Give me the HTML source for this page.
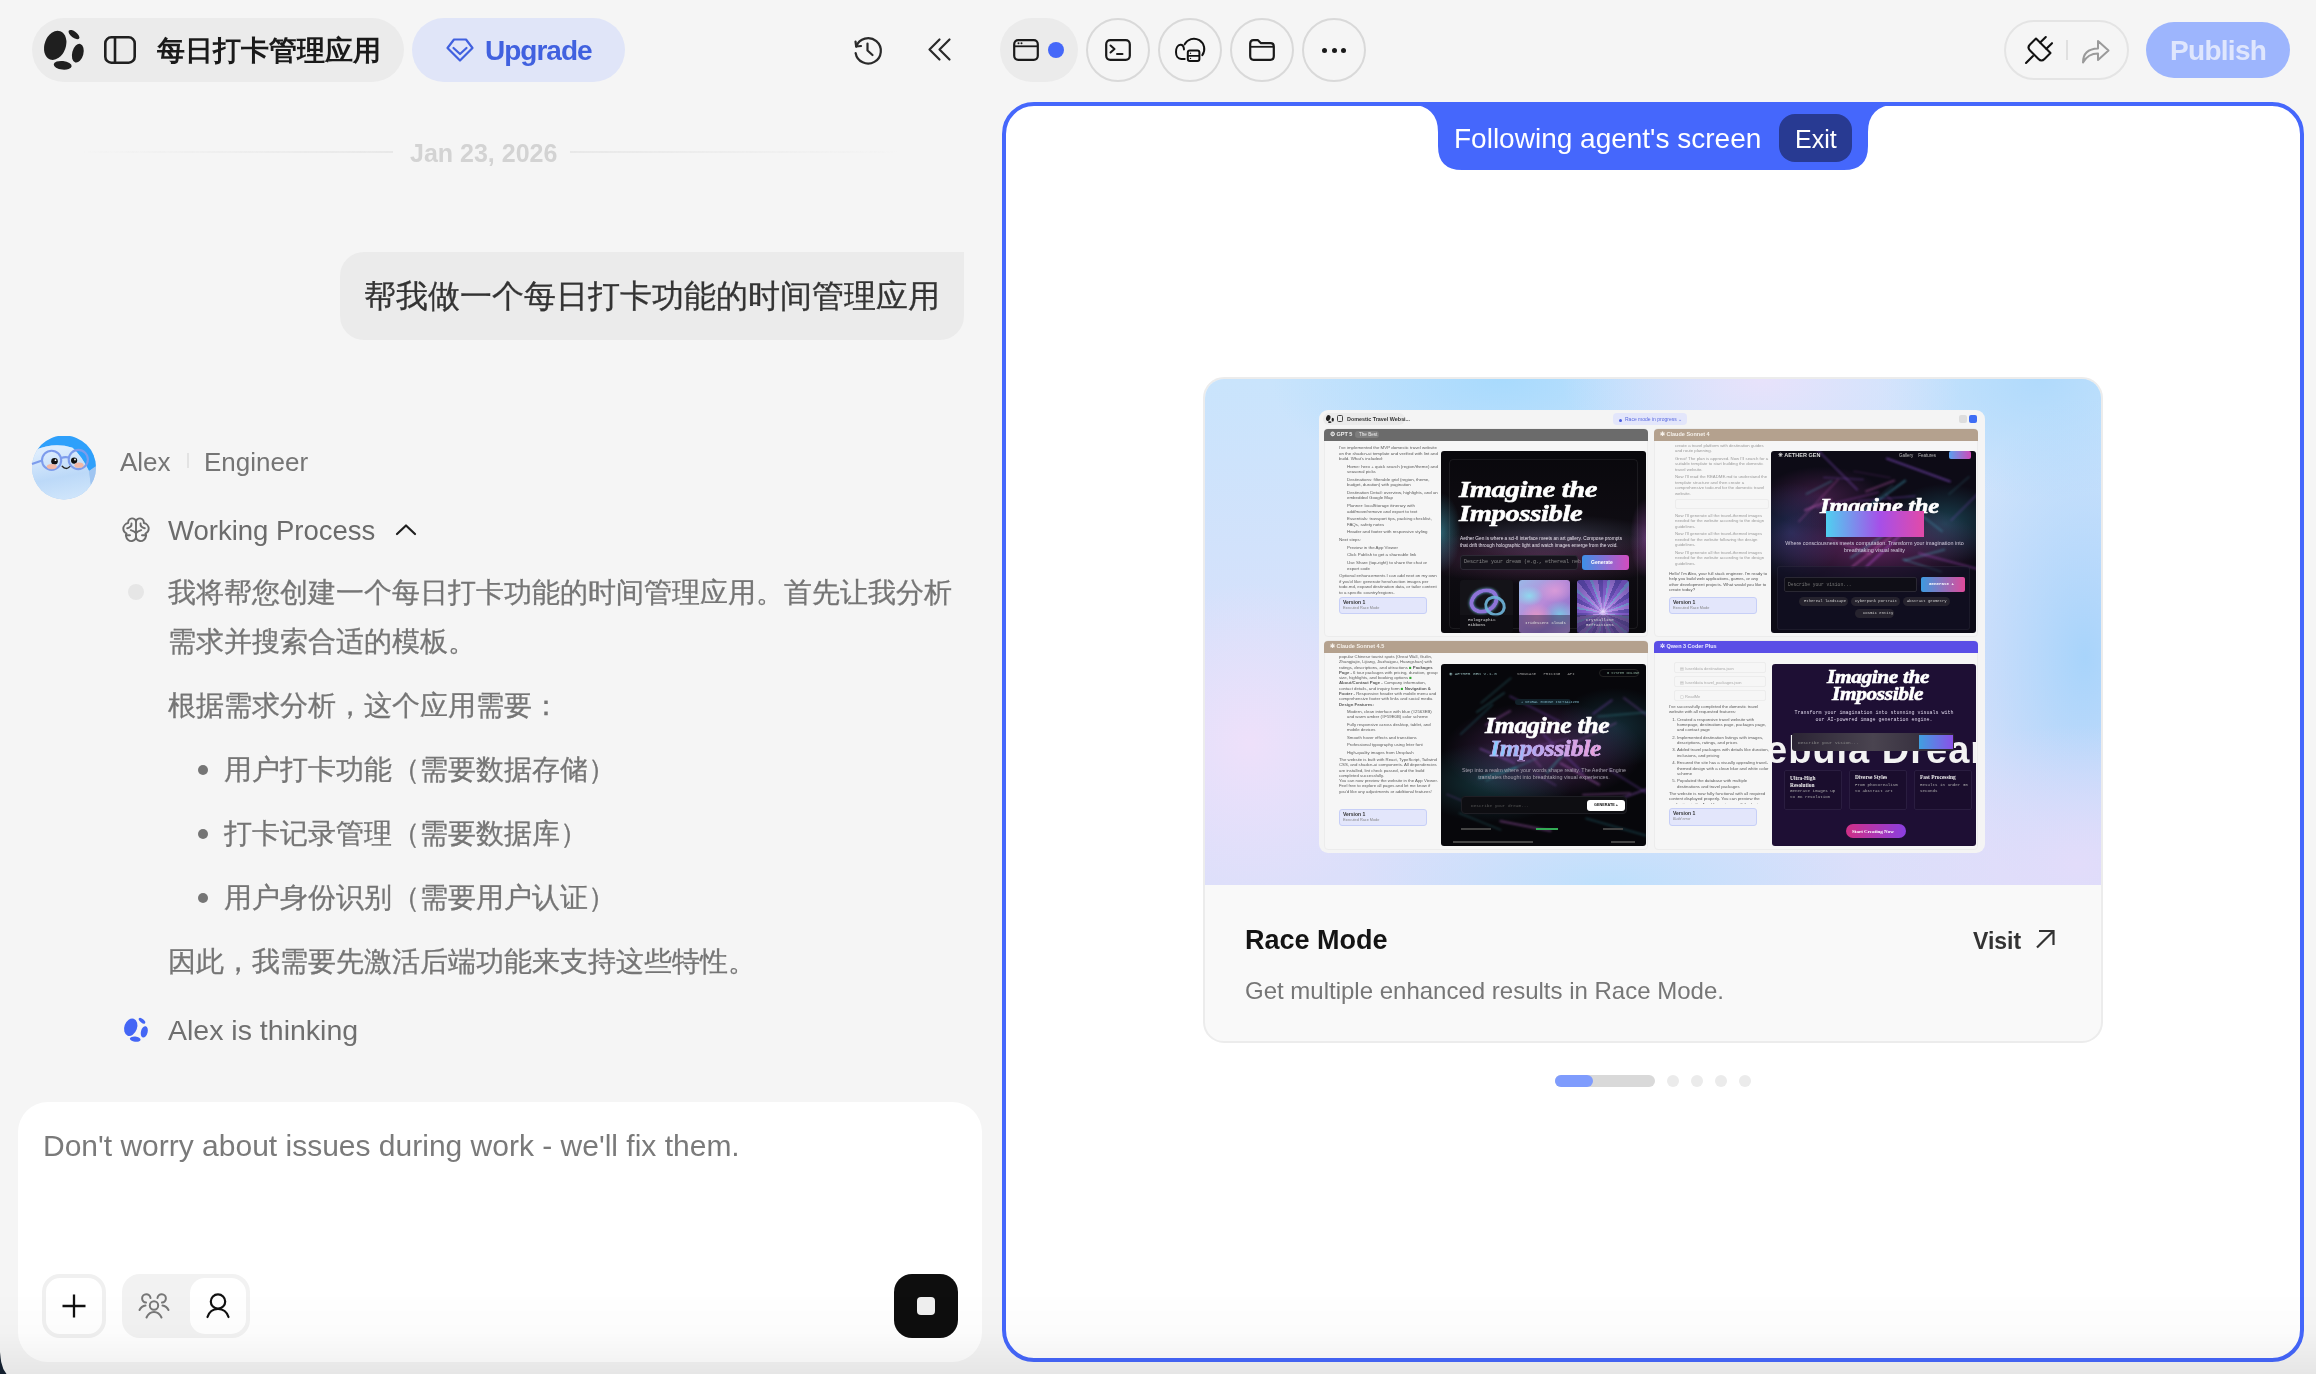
<!DOCTYPE html>
<html><head><meta charset="utf-8">
<style>
*{box-sizing:border-box;margin:0;padding:0}
html,body{width:2316px;height:1374px;overflow:hidden;background:#f5f5f5;font-family:"Liberation Sans",sans-serif}
body>*{will-change:transform}
.a{position:absolute}
.t{position:absolute;white-space:nowrap;line-height:1}
svg{position:absolute;overflow:visible}
.cj{-webkit-text-stroke:0.3px currentColor}
</style></head><body>
<!-- ============ LEFT TOP BAR ============ -->
<div class="a" style="left:32px;top:18px;width:372px;height:64px;border-radius:32px;background:#ebebeb"></div>
<svg style="left:44px;top:30px" width="40" height="40" viewBox="0 0 40 40">
  <ellipse cx="11.2" cy="15.3" rx="10.6" ry="15" transform="rotate(20 11.2 15.3)" fill="#1f1f1f"/>
  <ellipse cx="33.8" cy="23.2" rx="5.6" ry="9.6" transform="rotate(15 33.8 23.2)" fill="#1f1f1f"/>
  <ellipse cx="18.7" cy="35.3" rx="9" ry="4.3" transform="rotate(6 18.7 35.3)" fill="#1f1f1f"/>
  <ellipse cx="30" cy="4.6" rx="6.5" ry="3" transform="rotate(38 30 4.6)" fill="#1f1f1f"/>
</svg>
<svg style="left:104px;top:36px" width="32" height="28" viewBox="0 0 32 28">
  <rect x="1.3" y="1.3" width="29.4" height="25.4" rx="6" fill="none" stroke="#1f1f1f" stroke-width="2.6"/>
  <line x1="11" y1="2" x2="11" y2="26" stroke="#1f1f1f" stroke-width="2.6"/>
</svg>
<div class="t" id="title" style="left:157px;top:37px;font-size:28px;font-weight:bold;color:#1a1a1a">每日打卡管理应用</div>

<div class="a" style="left:412px;top:18px;width:213px;height:64px;border-radius:32px;background:#e0e5f8"></div>
<svg style="left:446px;top:38px" width="28" height="24" viewBox="0 0 28 24">
  <path d="M8 1.5 H20 L26.5 10 L14 22.5 L1.5 10 Z" fill="none" stroke="#4161df" stroke-width="2.2" stroke-linejoin="round"/>
  <path d="M7.5 10 L14 16 L20.5 10" fill="none" stroke="#4161df" stroke-width="2.2" stroke-linecap="round" stroke-linejoin="round"/>
</svg>
<div class="t" id="upg" style="left:485px;top:37px;font-size:28px;letter-spacing:-1px;font-weight:bold;color:#4161df">Upgrade</div>

<svg style="left:852px;top:34px" width="32" height="32" viewBox="0 0 32 32">
  <path d="M4.2 12.5 A12.7 12.7 0 1 1 3.6 19" fill="none" stroke="#2a2a2a" stroke-width="2.2" stroke-linecap="round"/>
  <path d="M3.5 7.5 L4.2 12.5 L9 12" fill="none" stroke="#2a2a2a" stroke-width="2.2" stroke-linecap="round" stroke-linejoin="round"/>
  <path d="M15.5 9.5 V16.5 L20.5 21" fill="none" stroke="#2a2a2a" stroke-width="2.2" stroke-linecap="round" stroke-linejoin="round"/>
</svg>
<svg style="left:926px;top:36px" width="28" height="28" viewBox="0 0 28 28">
  <path d="M13.5 3.5 L3.5 13.5 L13.5 23.5 M23.5 3.5 L13.5 13.5 L23.5 23.5" fill="none" stroke="#2a2a2a" stroke-width="2.2" stroke-linecap="round" stroke-linejoin="round"/>
</svg>

<!-- date -->
<div class="a" style="left:80px;top:151px;width:313px;height:2px;background:linear-gradient(90deg,rgba(232,232,232,0),#e8e8e8)"></div>
<div class="a" style="left:570px;top:151px;width:330px;height:2px;background:linear-gradient(90deg,#e8e8e8,rgba(232,232,232,0))"></div>
<div class="t" id="date" style="left:410px;top:141px;font-size:25px;font-weight:bold;color:#d3d3d3">Jan 23, 2026</div>

<!-- user bubble -->
<div class="a" style="left:340px;top:252px;width:624px;height:88px;border-radius:24px 0 24px 24px;background:#ebebeb"></div>
<div class="t cj" id="bub" style="left:364px;top:280px;font-size:32px;color:#333">帮我做一个每日打卡功能的时间管理应用</div>


<!-- avatar -->
<svg style="left:32px;top:436px" width="64" height="64" viewBox="0 0 64 64">
  <defs>
    <linearGradient id="avbg" x1="0.3" y1="0.1" x2="0.5" y2="1"><stop offset="0" stop-color="#dcecfd"/><stop offset="0.55" stop-color="#bcd9f8"/><stop offset="1" stop-color="#cfe5fb"/></linearGradient>
    <clipPath id="avclip"><circle cx="32" cy="31.5" r="32"/></clipPath>
  </defs>
  <g clip-path="url(#avclip)">
    <rect x="0" y="0" width="64" height="64" fill="#a8ccf3"/>
    <path d="M-2 0 H66 V30 L57 35 Q48 18 40.5 11.7 Q22 6 3 14 L-2 18 Z" fill="#2ea0fb"/>
    <path d="M3 14 Q22 6 40.5 11.7 Q50 20 57 35 L59 50 L62 64 H0 V16 Z" fill="url(#avbg)"/>
    <path d="M57 35 L59 50 L64 48 V30 Z" fill="#9fc5f1"/>
  </g>
  <g fill="none" stroke="#7d9cec" stroke-width="2.1">
    <circle cx="19.6" cy="24.3" r="9.6"/>
    <circle cx="46.3" cy="23.5" r="9.6"/>
    <path d="M29.3 22 Q33 20.5 36.7 21.5"/>
    <path d="M10 24.5 L0 28"/>
  </g>
  <circle cx="22.5" cy="25.3" r="3.3" fill="#111"/>
  <circle cx="42.1" cy="24.6" r="3.1" fill="#111"/>
  <circle cx="23.5" cy="24.2" r="0.9" fill="#fff"/>
  <circle cx="43" cy="23.5" r="0.9" fill="#fff"/>
  <ellipse cx="19.8" cy="30.6" rx="5" ry="2.6" fill="#f6b49c" opacity="0.9"/>
  <ellipse cx="47" cy="29.2" rx="4.6" ry="2.6" fill="#f6b49c" opacity="0.9"/>
  <path d="M30.2 30.3 Q34 34.5 37.8 30.6" fill="none" stroke="#222" stroke-width="1.3" stroke-linecap="round"/>
</svg>
<div class="t" id="alex" style="left:120px;top:449px;font-size:26px;color:#757575">Alex</div>
<div class="a" style="left:187px;top:453px;width:2px;height:15px;background:#e3e3e3"></div>
<div class="t" id="eng" style="left:204px;top:449px;font-size:26px;color:#757575">Engineer</div>

<!-- working process -->
<svg style="left:121px;top:517px" width="30" height="26" viewBox="0 0 30 26">
  <g fill="none" stroke="#6b6b6b" stroke-width="1.9" stroke-linecap="round" stroke-linejoin="round">
    <path d="M15 4.5 C14.5 1.5 11 0.8 9 2 C7.5 3 7 4.5 7.2 6 C4.5 6.5 2.3 9 2.3 11.8 C2.3 13.8 3.5 15.5 5.5 16.5 C5 17.2 4.8 18 5 19 C5.5 22.5 8.5 24.5 11 24 C13.5 23.5 15 21.5 15 19.5"/>
    <path d="M15 4.5 C15.5 1.5 19 0.8 21 2 C22.5 3 23 4.5 22.8 6 C25.5 6.5 27.7 9 27.7 11.8 C27.7 13.8 26.5 15.5 24.5 16.5 C25 17.2 25.2 18 25 19 C24.5 22.5 21.5 24.5 19 24 C16.5 23.5 15 21.5 15 19.5"/>
    <path d="M15 4.5 V21"/>
    <path d="M10.5 6.5 C10.8 9 9 11 6.2 11.2 M19.5 6.5 C19.2 9 21 11 23.8 11.2"/>
    <path d="M9.8 13.2 C11.8 13.8 14 14.8 15 16.2 M20.2 13.2 C18.2 13.8 16 14.8 15 16.2"/>
    <path d="M5.8 18.2 H9 M24.2 18.2 H21"/>
  </g>
</svg>
<div class="t" id="wp" style="left:168px;top:516.5px;font-size:27.5px;color:#6b6b6b">Working Process</div>
<svg style="left:394px;top:522px" width="24" height="16" viewBox="0 0 24 16">
  <path d="M3 12 L12 3.5 L21 12" fill="none" stroke="#1f1f1f" stroke-width="2.2" stroke-linecap="round" stroke-linejoin="round"/>
</svg>

<!-- process content -->
<div class="a" style="left:128px;top:584px;width:16px;height:16px;border-radius:50%;background:#e6e6e6"></div>
<div class="t cj" id="p1a" style="left:168px;top:579px;font-size:28px;color:#757575">我将帮您创建一个每日打卡功能的时间管理应用。首先让我分析</div>
<div class="t cj" id="p1b" style="left:168px;top:627.5px;font-size:28px;color:#757575">需求并搜索合适的模板。</div>
<div class="t cj" id="p2" style="left:168px;top:691.5px;font-size:28px;color:#757575">根据需求分析，这个应用需要：</div>
<div class="a" style="left:198px;top:764.5px;width:10px;height:10px;border-radius:50%;background:#757575"></div>
<div class="t cj" id="li1" style="left:224px;top:755.5px;font-size:28px;color:#757575">用户打卡功能（需要数据存储）</div>
<div class="a" style="left:198px;top:828.5px;width:10px;height:10px;border-radius:50%;background:#757575"></div>
<div class="t cj" id="li2" style="left:224px;top:819.5px;font-size:28px;color:#757575">打卡记录管理（需要数据库）</div>
<div class="a" style="left:198px;top:893px;width:10px;height:10px;border-radius:50%;background:#757575"></div>
<div class="t cj" id="li3" style="left:224px;top:884px;font-size:28px;color:#757575">用户身份识别（需要用户认证）</div>
<div class="t cj" id="p3" style="left:168px;top:948px;font-size:28px;color:#757575">因此，我需要先激活后端功能来支持这些特性。</div>

<!-- thinking -->
<svg style="left:124px;top:1018px" width="24" height="24" viewBox="0 0 40 40">
  <ellipse cx="11.2" cy="15.3" rx="10.6" ry="15" transform="rotate(20 11.2 15.3)" fill="#4466f5"/>
  <ellipse cx="33.8" cy="23.2" rx="5.6" ry="9.6" transform="rotate(15 33.8 23.2)" fill="#4466f5"/>
  <ellipse cx="18.7" cy="35.3" rx="9" ry="4.3" transform="rotate(6 18.7 35.3)" fill="#4466f5"/>
  <ellipse cx="30" cy="4.6" rx="6.5" ry="3" transform="rotate(38 30 4.6)" fill="#4466f5"/>
</svg>
<div class="t" id="think" style="left:168px;top:1015.5px;font-size:28.5px;color:#6f6f6f">Alex is thinking</div>

<!-- input box -->
<div class="a" style="left:18px;top:1102px;width:964px;height:260px;border-radius:30px;background:#fff"></div>
<div class="t" id="ph" style="left:43px;top:1131px;font-size:30px;color:#7a7a7a">Don't worry about issues during work - we'll fix them.</div>
<div class="a" style="left:42px;top:1274px;width:64px;height:64px;border-radius:18px;border:4px solid #f0f0f0;background:#fff"></div>
<svg style="left:62px;top:1294px" width="24" height="24" viewBox="0 0 24 24">
  <path d="M12 0.5 V23.5 M0.5 12 H23.5" stroke="#111" stroke-width="2.3"/>
</svg>
<div class="a" style="left:122px;top:1274px;width:128px;height:64px;border-radius:18px;background:#f2f2f2"></div>
<div class="a" style="left:190px;top:1278px;width:56px;height:56px;border-radius:15px;background:#fff"></div>
<svg style="left:138px;top:1293px" width="32" height="26" viewBox="0 0 32 26">
  <g fill="none" stroke="#777" stroke-width="2" stroke-linecap="round">
    <circle cx="16" cy="12.5" r="4.2"/>
    <path d="M8.5 24.5 Q11 19 16 19 Q21 19 23.5 24.5"/>
    <path d="M12.5 5 A4.2 4.2 0 1 0 8 9.6"/>
    <path d="M19.5 5 A4.2 4.2 0 1 1 24 9.6"/>
    <path d="M1.5 17 Q3.5 13 7.5 12.5"/>
    <path d="M30.5 17 Q28.5 13 24.5 12.5"/>
  </g>
</svg>
<svg style="left:206px;top:1293px" width="24" height="26" viewBox="0 0 24 26">
  <g fill="none" stroke="#111" stroke-width="2.2" stroke-linecap="round">
    <circle cx="12" cy="8.5" r="7.2"/>
    <path d="M1.5 24 Q4 16 12 16 Q20 16 22.5 24"/>
  </g>
</svg>
<div class="a" style="left:894px;top:1274px;width:64px;height:64px;border-radius:18px;background:#0e0e0e"></div>
<div class="a" style="left:917px;top:1297px;width:18px;height:18px;border-radius:4px;background:#efefef"></div>


<!-- ============ RIGHT TOOLBAR ============ -->
<div class="a" style="left:1000px;top:18px;width:78px;height:64px;border-radius:32px;background:#ebebeb"></div>
<svg style="left:1013px;top:39px" width="26" height="22" viewBox="0 0 26 22">
  <rect x="1.2" y="1.2" width="23.6" height="19.6" rx="4" fill="none" stroke="#1a1a1a" stroke-width="2.2"/>
  <line x1="1.5" y1="7.3" x2="24.5" y2="7.3" stroke="#1a1a1a" stroke-width="1.8"/>
  <circle cx="5.5" cy="4.3" r="1" fill="#1a1a1a"/><circle cx="8.5" cy="4.3" r="1" fill="#1a1a1a"/>
</svg>
<div class="a" style="left:1048px;top:42px;width:16px;height:16px;border-radius:50%;background:#4568f9"></div>

<div class="a" style="left:1086px;top:18px;width:64px;height:64px;border-radius:50%;border:2px solid #d9d9d9"></div>
<svg style="left:1105px;top:39px" width="26" height="22" viewBox="0 0 26 22">
  <rect x="1.2" y="1.2" width="23.6" height="19.6" rx="4" fill="none" stroke="#1a1a1a" stroke-width="2.2"/>
  <path d="M5.5 6.5 L9.5 10 L5.5 13.5" fill="none" stroke="#1a1a1a" stroke-width="2" stroke-linecap="round" stroke-linejoin="round"/>
  <line x1="12" y1="15" x2="17.5" y2="15" stroke="#1a1a1a" stroke-width="2" stroke-linecap="round"/>
</svg>

<div class="a" style="left:1158px;top:18px;width:64px;height:64px;border-radius:50%;border:2px solid #d9d9d9"></div>
<svg style="left:1175px;top:37px" width="30" height="26" viewBox="0 0 30 26">
  <g fill="none" stroke="#111" stroke-width="2" stroke-linecap="round">
    <path d="M9 12.4 C8.8 9.5 7.5 7.6 5.4 7.7 C2.8 7.9 1 11.2 1 14.9 C1 18.8 3 21.8 6.2 21.9 L9.7 21.9"/>
    <path d="M9.6 7.4 A10.4 10.4 0 1 1 27.3 18.2"/>
    <rect x="12.8" y="13.6" width="11.6" height="10.4" rx="2"/>
    <line x1="13" y1="18.9" x2="24.2" y2="18.9" stroke-width="1.7"/>
  </g>
  <circle cx="15.5" cy="16.3" r="0.7" fill="#111"/>
  <circle cx="15.5" cy="21.4" r="0.7" fill="#111"/>
</svg>

<div class="a" style="left:1230px;top:18px;width:64px;height:64px;border-radius:50%;border:2px solid #d9d9d9"></div>
<svg style="left:1249px;top:39px" width="26" height="22" viewBox="0 0 26 22">
  <path d="M1.2 17 V4.5 Q1.2 1.2 4.5 1.2 H9 L12 4.2 H21.5 Q24.8 4.2 24.8 7.5 V17 Q24.8 20.8 21.5 20.8 H4.5 Q1.2 20.8 1.2 17 Z" fill="none" stroke="#1a1a1a" stroke-width="2.2" stroke-linejoin="round"/>
  <line x1="1.5" y1="7.8" x2="24.5" y2="7.8" stroke="#1a1a1a" stroke-width="1.8"/>
</svg>

<div class="a" style="left:1302px;top:18px;width:64px;height:64px;border-radius:50%;border:2px solid #d9d9d9"></div>
<div class="a" style="left:1321.5px;top:47.5px;width:5px;height:5px;border-radius:50%;background:#1a1a1a"></div>
<div class="a" style="left:1331.5px;top:47.5px;width:5px;height:5px;border-radius:50%;background:#1a1a1a"></div>
<div class="a" style="left:1341px;top:47.5px;width:5px;height:5px;border-radius:50%;background:#1a1a1a"></div>

<div class="a" style="left:2004px;top:20px;width:125px;height:60px;border-radius:30px;border:2px solid #e4e4e4"></div>
<svg style="left:2024px;top:35px" width="30" height="30" viewBox="0 0 30 30">
  <g fill="none" stroke="#111" stroke-width="2.1" stroke-linecap="round" stroke-linejoin="round">
    <path d="M12 3.5 L6 9.5 Q3 12.5 6 15.5 L14.5 24 Q17.5 27 20.5 24 L26.5 18 Z"/>
    <path d="M16.2 7.6 L21.8 2 M22.4 13.8 L28 8.2"/>
    <path d="M9 21 L2 28"/>
  </g>
</svg>
<div class="a" style="left:2066px;top:40px;width:2px;height:20px;background:#e0e0e0"></div>
<svg style="left:2081px;top:37px" width="30" height="27" viewBox="0 0 30 27">
  <path d="M2 25.5 Q2 12 17 11.5 V4 L27.5 13.5 L17 23 V16.5 Q7 16.5 2 25.5 Z" fill="none" stroke="#9a9a9a" stroke-width="2" stroke-linejoin="round"/>
</svg>

<div class="a" style="left:2146px;top:22px;width:144px;height:56px;border-radius:28px;background:#9db5fd"></div>
<div class="t" id="pub" style="left:2170px;top:37px;font-size:28px;letter-spacing:-0.7px;font-weight:bold;color:#dfe6fd">Publish</div>

<!-- ============ PANEL ============ -->
<div class="a" style="left:1002px;top:102px;width:1302px;height:1260px;border-radius:32px;border:4px solid #4567fc;background:#fff"></div>
<!-- tab -->
<svg style="left:1410px;top:104px" width="486" height="68" viewBox="0 0 486 68">
  <path d="M0 0 H486 Q458 2 458 28 V42 Q458 66 434 66 H52 Q28 66 28 42 V28 Q28 2 0 0 Z" fill="#4567fc"/>
</svg>
<div class="t" id="fas" style="left:1454px;top:125px;font-size:28px;color:#fff">Following agent's screen</div>
<div class="a" style="left:1779px;top:114px;width:73px;height:48px;border-radius:16px;background:#283a92"></div>
<div class="t" id="exit" style="left:1795px;top:127px;font-size:25px;color:#fff">Exit</div>


<!-- ============ CARD ============ -->
<div class="a" id="card" style="left:1203px;top:377px;width:900px;height:666px;border-radius:21px;border:2px solid #ececec;background:#f9f9f9;overflow:hidden">
  <div class="a" style="left:0;top:0;width:898px;height:506px;background:
    radial-gradient(ellipse 150px 160px at 5% 72%, rgba(238,224,250,1) 0%, rgba(238,224,250,0) 100%),
    radial-gradient(ellipse 260px 90px at 45% 100%, rgba(190,224,252,1) 0%, rgba(190,224,252,0) 100%),
    radial-gradient(ellipse 200px 140px at 97% 96%, rgba(226,220,250,1) 0%, rgba(226,220,250,0) 100%),
    radial-gradient(ellipse 140px 260px at 98% 55%, rgba(168,212,251,1) 0%, rgba(168,212,251,0) 100%),
    radial-gradient(ellipse 200px 110px at 62% 0%, rgba(232,226,251,1) 0%, rgba(232,226,251,0) 100%),
    radial-gradient(ellipse 230px 110px at 33% 0%, rgba(168,218,253,1) 0%, rgba(168,218,253,0) 100%),
    radial-gradient(ellipse 160px 120px at 93% 0%, rgba(176,218,252,1) 0%, rgba(176,218,252,0) 100%),
    linear-gradient(180deg,#c9e4fc 0%,#d6e1fb 50%,#dcdffa 100%)"></div>
</div>
<!-- mini screenshot -->
<div class="a" id="mini" style="left:1319px;top:410px;width:666px;height:443px;border-radius:9px;background:#f4f4f4;overflow:hidden">
  <!-- header -->
  <div class="a" style="left:4px;top:3px;width:82px;height:12px;border-radius:6px;background:#ebebeb"></div>
  <svg style="left:7px;top:5px" width="8" height="8" viewBox="0 0 40 40"><ellipse cx="11.2" cy="15.3" rx="10.6" ry="15" transform="rotate(20 11.2 15.3)" fill="#222"/><ellipse cx="33.8" cy="23.2" rx="5.6" ry="9.6" fill="#222"/><ellipse cx="18.7" cy="35.3" rx="9" ry="4.3" fill="#222"/></svg>
  <div class="a" style="left:18px;top:5px;width:6px;height:7px;border:1px solid #444;border-radius:1.5px"></div>
  <div class="mt" style="left:28px;top:6.5px;font-size:5.4px;color:#333;font-weight:bold;white-space:nowrap">Domestic Travel Websi...</div>
  <div class="a" style="left:294px;top:3px;width:74px;height:12px;border-radius:4px;background:#e3e6fb"></div>
  <div class="a" style="left:300px;top:8.5px;width:3px;height:3px;border-radius:50%;background:#4a5de0"></div>
  <div class="mt" style="left:306px;top:7px;font-size:5px;color:#5a6ae0;white-space:nowrap">Race mode in progress ⌄</div>
  <div class="a" style="left:640px;top:5px;width:8px;height:8px;border-radius:2px;background:#ddd"></div>
  <div class="a" style="left:650px;top:5px;width:8px;height:8px;border-radius:2px;background:#3e6df5"></div>

  <!-- TL -->
  <div class="a" style="left:5px;top:18px;width:324px;height:209px;border-radius:4px;background:#f6f6f6;border:1px solid #ececec"></div>
  <div class="a" style="left:5px;top:19px;width:324px;height:11.5px;border-radius:4px 4px 0 0;background:#6b6b6b"></div>
  <div class="mt" style="left:11px;top:21.5px;font-size:5.5px;color:#eee;font-weight:bold;white-space:nowrap">⚙ GPT 5</div>
  <div class="a" style="left:36px;top:21px;width:24px;height:7px;background:#7d7d7d;border-radius:3px"></div>
  <div class="mt" style="left:40px;top:22px;font-size:4.6px;color:#eee;white-space:nowrap">The Best</div>
  <div class="mt" style="left:20px;top:35px;width:100px;height:150px;overflow:hidden;font-size:4.4px;line-height:5.5px">I've implemented the MVP domestic travel website on the shadcn-ui template and verified with lint and build. What's included:<ul><li>Home: hero + quick search (region/theme) and seasonal picks</li><li>Destinations: filterable grid (region, theme, budget, duration) with pagination</li><li>Destination Detail: overview, highlights, and an embedded Google Map</li><li>Planner: localStorage itinerary with add/move/remove and export to text</li><li>Essentials: transport tips, packing checklist, FAQs, safety notes</li><li>Header and footer with responsive styling</li></ul>Next steps:<ul><li>Preview in the App Viewer</li><li>Click Publish to get a shareable link</li><li>Use Share (top-right) to share the chat or export code</li></ul>Optional enhancements I can add next on my own if you'd like: generate hero/section images per todo.md, expand destination data, or tailor content to a specific country/regions.</div>
  <div class="a" style="left:20px;top:187px;width:88px;height:17px;border-radius:3px;background:#e3e6fb;border:1px solid #c7cff7"></div>
  <div class="mt" style="left:24px;top:189.5px;font-size:5px;color:#333;font-weight:bold;white-space:nowrap">Version 1</div>
  <div class="mt" style="left:24px;top:196px;font-size:3.8px;color:#888;white-space:nowrap">Executed Race Mode</div>
  <div class="a" style="left:122px;top:41px;width:205px;height:182px;border-radius:3px;background:
     radial-gradient(ellipse 110px 22px at 55% 47%, rgba(110,120,150,.35), rgba(0,0,0,0)),
     radial-gradient(ellipse 140px 28px at 50% 58%, rgba(140,70,130,.45), rgba(0,0,0,0)),
     radial-gradient(ellipse 20px 40px at 0% 45%, rgba(60,150,170,.6), rgba(0,0,0,0)),
     radial-gradient(ellipse 16px 40px at 100% 48%, rgba(150,80,170,.55), rgba(0,0,0,0)),
     linear-gradient(180deg,#09080c 0%,#100d14 50%,#0a090d 100%)">
    <div class="a" style="left:8px;top:8px;width:189px;height:170px;border-radius:4px;border:1px solid rgba(255,255,255,.07)"></div>
    <div class="t ser" style="left:18px;top:26px;font-size:24px;color:#fff;line-height:24px;transform:scaleX(1.19);transform-origin:0 0">Imagine the<br>Impossible</div>
    <div class="mt" style="left:19px;top:84px;width:180px;font-size:4.75px;line-height:7px;color:#e4dfea;white-space:nowrap">Aether Gen is where a sci-fi interface meets an art gallery. Compose prompts<br>that drift through holographic light and watch images emerge from the void.</div>
    <div class="a" style="left:19px;top:104px;width:118px;height:15px;border-radius:3px;background:#16141c;border:1px solid #2c2934"></div>
    <div class="mt" style="left:23px;top:108.5px;font-family:'Liberation Mono';font-size:5px;color:#888;white-space:nowrap">Describe your dream (e.g., ethereal neb</div>
    <div class="a" style="left:141px;top:104px;width:47px;height:15px;border-radius:3px;background:linear-gradient(90deg,#3d8fe6,#d34cc0)"></div>
    <div class="mt" style="left:150px;top:108.5px;font-size:5px;color:#fff;font-weight:bold;white-space:nowrap">Generate</div>
    <div class="a" style="left:19px;top:129px;width:53px;height:53px;border-radius:3px;background:#141318;overflow:hidden">
      <div class="a" style="left:9px;top:9px;width:30px;height:24px;border-radius:50%;border:4px solid #8d74d8;box-shadow:0 0 3px #6fc4e0, inset 0 0 3px #5ab0d8;transform:rotate(-25deg)"></div>
      <div class="a" style="left:24px;top:16px;width:22px;height:20px;border-radius:50%;border:3px solid #6fb6dc;transform:rotate(30deg);opacity:.9"></div>
    </div>
    <div class="a" style="left:78px;top:129px;width:51px;height:53px;border-radius:3px;background:
      radial-gradient(ellipse 14px 10px at 20% 30%,#8fd8ee,rgba(0,0,0,0)),
      radial-gradient(ellipse 18px 12px at 70% 20%,#d89ad8,rgba(0,0,0,0)),
      radial-gradient(ellipse 16px 14px at 35% 70%,#e49ac8,rgba(0,0,0,0)),
      radial-gradient(ellipse 16px 14px at 80% 65%,#7fc4e4,rgba(0,0,0,0)),
      linear-gradient(135deg,#9ab8e8,#b88ad8 45%,#9a7ad0 70%,#c0a3e6)"></div>
    <div class="a" style="left:136px;top:129px;width:52px;height:53px;border-radius:3px;background:
      radial-gradient(circle at 50% 60%,rgba(240,228,255,.95) 0,rgba(200,160,240,.6) 12%,rgba(120,90,190,.35) 40%,rgba(70,55,140,.5) 80%),
      repeating-conic-gradient(from 0deg at 50% 62%,#8a60d0 0deg 8deg,#7ab8dc 8deg 13deg,#b488e2 13deg 21deg,#5a48a8 21deg 30deg),
      #5a48a8"></div>
    <div class="a" style="left:19px;top:164px;width:53px;height:18px;background:rgba(10,10,14,.55)"></div>
    <div class="a" style="left:78px;top:164px;width:51px;height:18px;background:rgba(60,50,90,.55)"></div>
    <div class="a" style="left:136px;top:164px;width:52px;height:18px;background:rgba(60,50,90,.55)"></div>
    <div class="mt" style="left:27px;top:167px;width:44px;font-family:'Liberation Mono';font-size:4.2px;line-height:5px;color:#ddd">Holographic<br>Ribbons</div>
    <div class="mt" style="left:84px;top:170px;font-family:'Liberation Mono';font-size:4px;color:#ddd;white-space:nowrap">Iridescent Clouds</div>
    <div class="mt" style="left:145px;top:167px;width:44px;font-family:'Liberation Mono';font-size:4.2px;line-height:5px;color:#ddd">Crystalline<br>Refractions</div>
  </div>

  <!-- TR -->
  <div class="a" style="left:335px;top:18px;width:324px;height:209px;border-radius:4px;background:#f6f6f6;border:1px solid #ececec"></div>
  <div class="a" style="left:335px;top:19px;width:324px;height:11.5px;border-radius:4px 4px 0 0;background:#b4a18e"></div>
  <div class="mt" style="left:341px;top:21.5px;font-size:5.5px;color:#f5f0ea;font-weight:bold;white-space:nowrap">✱ Claude Sonnet 4</div>
  <div class="mt" style="left:350px;top:33px;width:100px;height:124px;overflow:hidden;color:#9a9a9a;font-size:4.3px;line-height:5.4px"><ul style="margin:0 0 0 6px"><li>create a travel platform with destination guides and route planning.</li><li>Great! The plan is approved. Now I'll search for a suitable template to start building the domestic travel website.</li><li>Now I'll read the README.md to understand the template structure and then create a comprehensive todo.md for the domestic travel website.</li></ul><div style="height:10px;margin:3px 0 4px 6px;border:1px solid #ececec;border-radius:2px"></div><ul style="margin:0 0 0 6px"><li>Now I'll generate all the travel-themed images needed for the website according to the design guidelines.</li><li>Now I'll generate all the travel-themed images needed for the website following the design guidelines.</li><li>Now I'll generate all the travel-themed images needed for the website according to the design guidelines.</li><li>Now I'll generate all the travel-themed images needed for the website according to the design guidelines.</li><li>Now I'll generate all the travel-themed images needed for the website according to the design guidelines.</li></ul></div>
  <div class="mt" style="left:350px;top:161px;width:100px;color:#555;font-size:4.3px;line-height:5.3px">Hello! I'm Alex, your full stack engineer. I'm ready to help you build web applications, games, or any other development projects. What would you like to create today?</div>
  <div class="a" style="left:350px;top:187px;width:88px;height:17px;border-radius:3px;background:#e3e6fb;border:1px solid #c7cff7"></div>
  <div class="mt" style="left:354px;top:189.5px;font-size:5px;color:#333;font-weight:bold;white-space:nowrap">Version 1</div>
  <div class="mt" style="left:354px;top:196px;font-size:3.8px;color:#888;white-space:nowrap">Executed Race Mode</div>
  <div class="a" style="left:452px;top:41px;width:205px;height:182px;border-radius:3px;overflow:hidden;background:
     radial-gradient(ellipse 110px 45px at 50% 52%, rgba(170,60,160,.5), rgba(0,0,0,0)),
     radial-gradient(ellipse 60px 40px at 85% 40%, rgba(40,130,150,.45), rgba(0,0,0,0)),
     radial-gradient(ellipse 50px 50px at 10% 45%, rgba(60,90,170,.4), rgba(0,0,0,0)),
     radial-gradient(ellipse 60px 30px at 25% 25%, rgba(150,60,150,.35), rgba(0,0,0,0)),
     #0d0b16">
    <div class="a" style="left:173px;top:53px;width:45px;height:2px;background:#8a50d0;opacity:0.27;transform:rotate(-45deg);filter:blur(1.2px);border-radius:1px"></div>
    <div class="a" style="left:174px;top:34px;width:28px;height:1px;background:#50b8c8;opacity:0.27;transform:rotate(-41deg);filter:blur(1.2px);border-radius:1px"></div>
    <div class="a" style="left:74px;top:97px;width:60px;height:2px;background:#d060c0;opacity:0.44;transform:rotate(-38deg);filter:blur(1.2px);border-radius:1px"></div>
    <div class="a" style="left:110px;top:53px;width:28px;height:1px;background:#b04cc8;opacity:0.42;transform:rotate(48deg);filter:blur(1.2px);border-radius:1px"></div>
    <div class="a" style="left:77px;top:68px;width:43px;height:1px;background:#8a50d0;opacity:0.50;transform:rotate(7deg);filter:blur(1.2px);border-radius:1px"></div>
    <div class="a" style="left:110px;top:78px;width:31px;height:2px;background:#8a50d0;opacity:0.47;transform:rotate(-13deg);filter:blur(1.2px);border-radius:1px"></div>
    <div class="a" style="left:118px;top:63px;width:28px;height:1.5px;background:#3fa0b8;opacity:0.39;transform:rotate(3deg);filter:blur(1.2px);border-radius:1px"></div>
    <div class="a" style="left:54px;top:94px;width:48px;height:1.5px;background:#d060c0;opacity:0.27;transform:rotate(20deg);filter:blur(1.2px);border-radius:1px"></div>
    <div class="a" style="left:87px;top:47px;width:58px;height:1px;background:#8a50d0;opacity:0.55;transform:rotate(-5deg);filter:blur(1.2px);border-radius:1px"></div>
    <div class="a" style="left:74px;top:90px;width:57px;height:2px;background:#50b8c8;opacity:0.38;transform:rotate(-35deg);filter:blur(1.2px);border-radius:1px"></div>
    <div class="a" style="left:146px;top:71px;width:29px;height:1.5px;background:#3fa0b8;opacity:0.35;transform:rotate(38deg);filter:blur(1.2px);border-radius:1px"></div>
    <div class="a" style="left:86px;top:94px;width:63px;height:1.5px;background:#b04cc8;opacity:0.55;transform:rotate(-43deg);filter:blur(1.2px);border-radius:1px"></div>
    <div class="a" style="left:113px;top:18px;width:69px;height:1.5px;background:#8a50d0;opacity:0.56;transform:rotate(20deg);filter:blur(1.2px);border-radius:1px"></div>
    <div class="a" style="left:132px;top:103px;width:43px;height:2px;background:#50b8c8;opacity:0.36;transform:rotate(-15deg);filter:blur(1.2px);border-radius:1px"></div>
    <div class="a" style="left:93px;top:34px;width:32px;height:1.5px;background:#d060c0;opacity:0.37;transform:rotate(-21deg);filter:blur(1.2px);border-radius:1px"></div>
    <div class="a" style="left:32px;top:53px;width:30px;height:2px;background:#d060c0;opacity:0.50;transform:rotate(-22deg);filter:blur(1.2px);border-radius:1px"></div>
    <div class="a" style="left:130px;top:114px;width:42px;height:1px;background:#50b8c8;opacity:0.55;transform:rotate(18deg);filter:blur(1.2px);border-radius:1px"></div>
    <div class="a" style="left:33px;top:36px;width:30px;height:1px;background:#50b8c8;opacity:0.50;transform:rotate(-27deg);filter:blur(1.2px);border-radius:1px"></div>
    <div class="a" style="left:52px;top:27px;width:41px;height:1px;background:#8a50d0;opacity:0.42;transform:rotate(3deg);filter:blur(1.2px);border-radius:1px"></div>
    <div class="a" style="left:146px;top:110px;width:69px;height:2px;background:#b04cc8;opacity:0.39;transform:rotate(15deg);filter:blur(1.2px);border-radius:1px"></div>
    <div class="a" style="left:69px;top:53px;width:60px;height:1px;background:#50b8c8;opacity:0.27;transform:rotate(-40deg);filter:blur(1.2px);border-radius:1px"></div>
    <div class="a" style="left:82px;top:23px;width:38px;height:1px;background:#b04cc8;opacity:0.24;transform:rotate(10deg);filter:blur(1.2px);border-radius:1px"></div>
    <div class="a" style="left:18px;top:49px;width:59px;height:1px;background:#d060c0;opacity:0.44;transform:rotate(-47deg);filter:blur(1.2px);border-radius:1px"></div>
    <div class="a" style="left:44px;top:48px;width:65px;height:1.5px;background:#b04cc8;opacity:0.28;transform:rotate(-14deg);filter:blur(1.2px);border-radius:1px"></div>
    <div class="a" style="left:86px;top:44px;width:54px;height:1.5px;background:#3fa0b8;opacity:0.48;transform:rotate(-36deg);filter:blur(1.2px);border-radius:1px"></div>
    <div class="a" style="left:28px;top:14px;width:69px;height:2px;background:#8a50d0;opacity:0.36;transform:rotate(45deg);filter:blur(1.2px);border-radius:1px"></div>
    <div class="mt" style="left:7px;top:1.5px;font-size:5.5px;color:#ddd;font-weight:bold;white-space:nowrap">✳ AETHER GEN</div>
    <div class="mt" style="left:128px;top:2px;font-size:4.5px;color:#bbb;white-space:nowrap">Gallery &nbsp;&nbsp; Features</div>
    <div class="a" style="left:178px;top:0px;width:22px;height:8px;border-radius:2px;background:linear-gradient(90deg,#5aa0ee,#d04ab8)"></div>
    <div class="t ser" style="left:49px;top:44px;font-size:22px;color:#fff;line-height:22px;transform:scaleX(1.12);transform-origin:0 0">Imagine the</div>
    <div class="a" style="left:55px;top:60px;width:98px;height:26px;background:linear-gradient(90deg,#4fd0f0,#a64fe8 55%,#e24aa8)"></div>
    <div class="mt" style="left:12px;top:89px;width:183px;font-size:5.4px;line-height:7px;color:#d0cadc;text-align:center">Where consciousness meets computation. Transform your imagination into breathtaking visual reality</div>
    <div class="a" style="left:6px;top:115px;width:193px;height:64px;border-radius:3px;background:rgba(20,18,40,.55);border:1px solid rgba(255,255,255,.05)"></div>
    <div class="a" style="left:13px;top:126px;width:133px;height:15px;border-radius:2px;background:#0f0e16;border:1px solid #2a2833"></div>
    <div class="mt" style="left:17px;top:130.5px;font-family:'Liberation Mono';font-size:4.6px;color:#777;white-space:nowrap">Describe your vision...</div>
    <div class="a" style="left:150px;top:126px;width:44px;height:15px;border-radius:2px;background:linear-gradient(90deg,#3c9be0,#e04a9a)"></div>
    <div class="a" style="left:28px;top:146px;width:49px;height:9px;border-radius:5px;background:#26232e"></div>
    <div class="a" style="left:80px;top:146px;width:49px;height:9px;border-radius:5px;background:#26232e"></div>
    <div class="a" style="left:132px;top:146px;width:47px;height:9px;border-radius:5px;background:#26232e"></div>
    <div class="a" style="left:84px;top:158px;width:39px;height:9px;border-radius:5px;background:#26232e"></div>
    <div class="mt" style="left:33px;top:148px;font-family:'Liberation Mono';font-size:3.9px;color:#ccc;white-space:nowrap">Ethereal landscape</div>
    <div class="mt" style="left:84px;top:148px;font-family:'Liberation Mono';font-size:3.9px;color:#ccc;white-space:nowrap">Cyberpunk portrait</div>
    <div class="mt" style="left:136px;top:148px;font-family:'Liberation Mono';font-size:3.9px;color:#ccc;white-space:nowrap">Abstract geometry</div>
    <div class="mt" style="left:92px;top:160px;font-family:'Liberation Mono';font-size:3.9px;color:#ccc;white-space:nowrap">Cosmic entity</div>
    <div class="mt" style="left:158px;top:131px;font-family:'Liberation Mono';font-size:4.2px;color:#fff;font-weight:bold;white-space:nowrap">Generate +</div>
  </div>

  <!-- BL -->
  <div class="a" style="left:5px;top:230px;width:324px;height:210px;border-radius:4px;background:#f6f6f6;border:1px solid #ececec"></div>
  <div class="a" style="left:5px;top:231px;width:324px;height:11.5px;border-radius:4px 4px 0 0;background:#b4a18e"></div>
  <div class="mt" style="left:11px;top:233.5px;font-size:5.5px;color:#f5f0ea;font-weight:bold;white-space:nowrap">✱ Claude Sonnet 4.5</div>
  <div class="mt" style="left:20px;top:244px;width:100px;height:152px;overflow:hidden;font-size:4.3px;line-height:5.3px">popular Chinese tourist spots (Great Wall, Guilin, Zhangjiajie, Lijiang, Jiuzhaigou, Huangshan) with ratings, descriptions, and attractions <b style="color:#3a3">■</b> <b>Packages Page</b> - 6 tour packages with pricing, duration, group size, highlights, and booking options <b style="color:#3a3">■</b> <b>About/Contact Page</b> - Company information, contact details, and inquiry form <b style="color:#3a3">■</b> <b>Navigation &amp; Footer</b> - Responsive header with mobile menu and comprehensive footer with links and social media<br><b>Design Features:</b><ul><li>Modern, clean interface with blue (#2563EB) and warm amber (#F59E0B) color scheme</li><li>Fully responsive across desktop, tablet, and mobile devices</li><li>Smooth hover effects and transitions</li><li>Professional typography using Inter font</li><li>High-quality images from Unsplash</li></ul>The website is built with React, TypeScript, Tailwind CSS, and shadcn-ui components. All dependencies are installed, lint check passed, and the build completed successfully.<br>You can now preview the website in the App Viewer. Feel free to explore all pages and let me know if you'd like any adjustments or additional features!</div>
  <div class="a" style="left:20px;top:399px;width:88px;height:17px;border-radius:3px;background:#e3e6fb;border:1px solid #c7cff7"></div>
  <div class="mt" style="left:24px;top:401.5px;font-size:5px;color:#333;font-weight:bold;white-space:nowrap">Version 1</div>
  <div class="mt" style="left:24px;top:408px;font-size:3.8px;color:#888;white-space:nowrap">Executed Race Mode</div>
  <div class="a" style="left:122px;top:254px;width:205px;height:182px;border-radius:3px;overflow:hidden;background:
     radial-gradient(ellipse 100px 50px at 50% 48%, rgba(120,60,140,.55), rgba(0,0,0,0)),
     radial-gradient(ellipse 80px 40px at 25% 65%, rgba(40,120,130,.4), rgba(0,0,0,0)),
     radial-gradient(ellipse 60px 40px at 85% 35%, rgba(40,110,130,.35), rgba(0,0,0,0)),
     #07070b">
    <div class="a" style="left:160px;top:130px;width:59px;height:1.5px;background:#8a50b8;opacity:0.46;transform:rotate(-20deg);filter:blur(1.2px);border-radius:1px"></div>
    <div class="a" style="left:65px;top:44px;width:58px;height:2px;background:#6a40a0;opacity:0.41;transform:rotate(27deg);filter:blur(1.2px);border-radius:1px"></div>
    <div class="a" style="left:116px;top:109px;width:46px;height:1.5px;background:#b060c0;opacity:0.50;transform:rotate(29deg);filter:blur(1.2px);border-radius:1px"></div>
    <div class="a" style="left:37px;top:91px;width:39px;height:1.5px;background:#8a50b8;opacity:0.50;transform:rotate(23deg);filter:blur(1.2px);border-radius:1px"></div>
    <div class="a" style="left:36px;top:108px;width:41px;height:1.5px;background:#2f8a98;opacity:0.55;transform:rotate(-16deg);filter:blur(1.2px);border-radius:1px"></div>
    <div class="a" style="left:42px;top:53px;width:30px;height:2px;background:#b060c0;opacity:0.40;transform:rotate(-30deg);filter:blur(1.2px);border-radius:1px"></div>
    <div class="a" style="left:92px;top:115px;width:25px;height:1px;background:#8a50b8;opacity:0.51;transform:rotate(30deg);filter:blur(1.2px);border-radius:1px"></div>
    <div class="a" style="left:141px;top:129px;width:49px;height:2px;background:#b060c0;opacity:0.39;transform:rotate(-2deg);filter:blur(1.2px);border-radius:1px"></div>
    <div class="a" style="left:16px;top:157px;width:46px;height:1px;background:#40a0a8;opacity:0.37;transform:rotate(22deg);filter:blur(1.2px);border-radius:1px"></div>
    <div class="a" style="left:32px;top:38px;width:35px;height:1px;background:#40a0a8;opacity:0.50;transform:rotate(-35deg);filter:blur(1.2px);border-radius:1px"></div>
    <div class="a" style="left:143px;top:162px;width:64px;height:2px;background:#2f8a98;opacity:0.29;transform:rotate(16deg);filter:blur(1.2px);border-radius:1px"></div>
    <div class="a" style="left:4px;top:136px;width:33px;height:1px;background:#8a50b8;opacity:0.41;transform:rotate(23deg);filter:blur(1.2px);border-radius:1px"></div>
    <div class="a" style="left:177px;top:48px;width:52px;height:1.5px;background:#8a50b8;opacity:0.32;transform:rotate(37deg);filter:blur(1.2px);border-radius:1px"></div>
    <div class="a" style="left:42px;top:105px;width:57px;height:1px;background:#40a0a8;opacity:0.51;transform:rotate(-24deg);filter:blur(1.2px);border-radius:1px"></div>
    <div class="a" style="left:163px;top:116px;width:47px;height:2px;background:#6a40a0;opacity:0.38;transform:rotate(32deg);filter:blur(1.2px);border-radius:1px"></div>
    <div class="a" style="left:100px;top:96px;width:33px;height:2px;background:#40a0a8;opacity:0.49;transform:rotate(-48deg);filter:blur(1.2px);border-radius:1px"></div>
    <div class="a" style="left:149px;top:42px;width:25px;height:2px;background:#6a40a0;opacity:0.48;transform:rotate(-36deg);filter:blur(1.2px);border-radius:1px"></div>
    <div class="a" style="left:62px;top:95px;width:28px;height:1px;background:#8a50b8;opacity:0.52;transform:rotate(6deg);filter:blur(1.2px);border-radius:1px"></div>
    <div class="a" style="left:35px;top:26px;width:40px;height:1px;background:#40a0a8;opacity:0.42;transform:rotate(-40deg);filter:blur(1.2px);border-radius:1px"></div>
    <div class="a" style="left:58px;top:161px;width:53px;height:1.5px;background:#b060c0;opacity:0.46;transform:rotate(11deg);filter:blur(1.2px);border-radius:1px"></div>
    <div class="a" style="left:94px;top:89px;width:57px;height:1.5px;background:#6a40a0;opacity:0.52;transform:rotate(44deg);filter:blur(1.2px);border-radius:1px"></div>
    <div class="a" style="left:156px;top:49px;width:60px;height:1.5px;background:#40a0a8;opacity:0.28;transform:rotate(-5deg);filter:blur(1.2px);border-radius:1px"></div>
    <div class="a" style="left:13px;top:55px;width:45px;height:1px;background:#2f8a98;opacity:0.49;transform:rotate(-43deg);filter:blur(1.2px);border-radius:1px"></div>
    <div class="a" style="left:109px;top:73px;width:70px;height:1px;background:#b060c0;opacity:0.55;transform:rotate(-25deg);filter:blur(1.2px);border-radius:1px"></div>
    <div class="a" style="left:75px;top:91px;width:31px;height:1.5px;background:#b060c0;opacity:0.29;transform:rotate(49deg);filter:blur(1.2px);border-radius:1px"></div>
    <div class="a" style="left:71px;top:81px;width:57px;height:1px;background:#8a50b8;opacity:0.47;transform:rotate(-14deg);filter:blur(1.2px);border-radius:1px"></div>
    <div class="mt" style="left:8px;top:7px;font-family:'Liberation Mono';font-size:4.4px;color:#8aa;white-space:nowrap">◉ AETHER GEN V.1.0</div>
    <div class="mt" style="left:76px;top:7.5px;font-family:'Liberation Mono';font-size:4px;color:#999;white-space:nowrap">SHOWCASE &nbsp; PRICING &nbsp; API</div>
    <div class="a" style="left:158px;top:5px;width:40px;height:8px;border-radius:4px;border:1px solid #222"></div>
    <div class="a" style="left:74px;top:35px;width:56px;height:6px;border-radius:3px;background:#13222a"></div>
    <div class="mt" style="left:80px;top:36px;font-family:'Liberation Mono';font-size:3.6px;color:#7ab;white-space:nowrap">+ NEURAL ENGINE INITIALIZED</div>
    <div class="mt" style="left:166px;top:7px;font-family:'Liberation Mono';font-size:3.6px;color:#8a9;white-space:nowrap">● SYSTEM ONLINE</div>
    <div class="mt" style="left:153px;top:139px;font-size:3.8px;color:#111;font-weight:bold;white-space:nowrap;z-index:2">GENERATE +</div>
    <div class="t ser" style="left:44px;top:50px;font-size:23px;color:#fff;line-height:23px;transform:scaleX(1.12);transform-origin:0 0">Imagine the</div>
    <div class="t ser" style="left:49px;top:73px;font-size:23px;line-height:23px;color:#c9a6e8;background:linear-gradient(90deg,#7fd0ff,#b8a6f0 45%,#f0a0d8);-webkit-background-clip:text;background-clip:text;-webkit-text-fill-color:transparent;transform:scaleX(1.12);transform-origin:0 0">Impossible</div>
    <div class="mt" style="left:20px;top:103px;width:166px;font-size:5.4px;line-height:6.8px;color:#a8a3b0;text-align:center">Step into a realm where your words shape reality. The Aether Engine translates thought into breathtaking visual experiences.</div>
    <div class="a" style="left:20px;top:132px;width:166px;height:18px;border-radius:4px;background:#0e0e12;border:1px solid #1e1e24"></div>
    <div class="mt" style="left:30px;top:138.5px;font-family:'Liberation Mono';font-size:4.4px;color:#555;white-space:nowrap">Describe your dream...</div>
    <div class="a" style="left:146px;top:136px;width:38px;height:11px;border-radius:3px;background:#fff"></div>
    <div class="a" style="left:20px;top:164px;width:30px;height:2px;background:#444"></div>
    <div class="a" style="left:95px;top:164px;width:22px;height:2px;background:#3a5"></div>
    <div class="a" style="left:162px;top:164px;width:20px;height:2px;background:#444"></div>
    <div class="a" style="left:12px;top:177px;width:80px;height:2px;background:#444"></div>
    <div class="a" style="left:170px;top:177px;width:24px;height:2px;background:#444"></div>
  </div>

  <!-- BR -->
  <div class="a" style="left:335px;top:230px;width:324px;height:210px;border-radius:4px;background:#f6f6f6;border:1px solid #ececec"></div>
  <div class="a" style="left:335px;top:231px;width:324px;height:11.5px;border-radius:4px 4px 0 0;background:#5a4ee6"></div>
  <div class="mt" style="left:341px;top:233.5px;font-size:5.5px;color:#ecebff;font-weight:bold;white-space:nowrap">✲ Qwen 3 Coder Plus</div>
  <div class="a" style="left:355px;top:252px;width:92px;height:11px;border-radius:2px;border:1px solid #ececec"></div>
  <div class="a" style="left:355px;top:266px;width:92px;height:11px;border-radius:2px;border:1px solid #ececec"></div>
  <div class="a" style="left:355px;top:280px;width:92px;height:11px;border-radius:2px;border:1px solid #ececec"></div>
  <div class="mt" style="left:361px;top:255.5px;font-size:4px;color:#aaa;white-space:nowrap">▤ /user/data destinations.json</div>
  <div class="mt" style="left:361px;top:269.5px;font-size:4px;color:#aaa;white-space:nowrap">▤ /user/data travel_packages.json</div>
  <div class="mt" style="left:361px;top:283.5px;font-size:4px;color:#aaa;white-space:nowrap">▢ ReadMe</div>
  <div class="mt" style="left:350px;top:294px;width:100px;height:100px;overflow:hidden;font-size:4.3px;line-height:5.3px">I've successfully completed the domestic travel website with all requested features:<ol><li>Created a responsive travel website with homepage, destinations page, packages page, and contact page</li><li>Implemented destination listings with images, descriptions, ratings, and prices</li><li>Added travel packages with details like duration, inclusions, and pricing</li><li>Ensured the site has a visually appealing travel-themed design with a clean blue and white color scheme</li><li>Populated the database with multiple destinations and travel packages</li></ol>The website is now fully functional with all required content displayed properly. You can preview the application in the App Viewer to see all the features in action. The site is responsive and ready for deployment.</div>
  <div class="a" style="left:350px;top:398px;width:88px;height:18px;border-radius:3px;background:#e3e6fb;border:1px solid #c7cff7"></div>
  <div class="mt" style="left:354px;top:400.5px;font-size:5px;color:#333;font-weight:bold;white-space:nowrap">Version 1</div>
  <div class="mt" style="left:354px;top:407px;font-size:3.8px;color:#888;font-style:italic;white-space:nowrap">Build error</div>
  <div class="a" style="left:453px;top:254px;width:204px;height:182px;border-radius:3px;background:#1e0f34;overflow:hidden">
    <div class="t ser" style="left:55px;top:4px;font-size:19px;color:#fff;line-height:17px;transform:scaleX(1.12);transform-origin:0 0">Imagine the<br>&nbsp;Impossible</div>
    <div class="mt" style="left:18px;top:46px;width:168px;font-family:'Liberation Mono';font-size:5px;line-height:6.6px;color:#ddd6ea;text-align:center">Transform your imagination into stunning visuals with our AI-powered image generation engine.</div>
    <div class="t" style="left:-6px;top:67px;font-size:38px;font-weight:bold;color:#f2f2f2;line-height:38px;letter-spacing:1px">ebula Drean</div>
    <div class="a" style="left:20px;top:69px;width:162px;height:18px;border-radius:3px;background:linear-gradient(90deg,#2b2434,#4a4450 50%,#2b2434)"></div>
    <div class="mt" style="left:26px;top:75.5px;font-family:'Liberation Mono';font-size:4.4px;color:#888;white-space:nowrap">Describe your vision...</div>
    <div class="a" style="left:147px;top:71px;width:34px;height:14px;background:linear-gradient(90deg,#40a0e0,#8a50e8)"></div>
    <div class="a" style="left:12px;top:106px;width:58px;height:40px;border-radius:2px;background:#1a0d2d;border:1px solid #2a1d40"></div>
    <div class="a" style="left:77px;top:106px;width:58px;height:40px;border-radius:2px;background:#1a0d2d;border:1px solid #2a1d40"></div>
    <div class="a" style="left:142px;top:106px;width:58px;height:40px;border-radius:2px;background:#1a0d2d;border:1px solid #2a1d40"></div>
    <div class="mt" style="left:18px;top:111px;width:40px;font-family:'Liberation Serif';font-weight:bold;font-size:5.4px;line-height:6.5px;color:#eee">Ultra-High Resolution</div>
    <div class="mt" style="left:18px;top:125px;width:48px;font-family:'Liberation Mono';font-size:4.2px;line-height:5.6px;color:#aaa">Generate images up to 8K resolution</div>
    <div class="mt" style="left:83px;top:111px;width:50px;font-family:'Liberation Serif';font-weight:bold;font-size:5.4px;color:#eee">Diverse Styles</div>
    <div class="mt" style="left:83px;top:119px;width:48px;font-family:'Liberation Mono';font-size:4.2px;line-height:5.6px;color:#aaa">From photorealism to abstract art</div>
    <div class="mt" style="left:148px;top:111px;width:50px;font-family:'Liberation Serif';font-weight:bold;font-size:5.4px;color:#eee">Fast Processing</div>
    <div class="mt" style="left:148px;top:119px;width:48px;font-family:'Liberation Mono';font-size:4.2px;line-height:5.6px;color:#aaa">Results in under 30 seconds</div>
    <div class="a" style="left:74px;top:160px;width:60px;height:14px;border-radius:7px;background:linear-gradient(90deg,#d02f86,#8a3fe0)"></div>
    <div class="mt" style="left:80px;top:164.5px;font-family:'Liberation Serif';font-weight:bold;font-size:5px;color:#fff;white-space:nowrap">Start Creating Now</div>
  </div>
</div>
<style>
.ser{font-family:"Liberation Serif",serif;font-style:italic;font-weight:bold;letter-spacing:-0.3px;-webkit-text-stroke:0.6px currentColor}
.mt{position:absolute;font-family:"Liberation Sans",sans-serif;font-size:4.6px;line-height:5.6px;color:#5a5a5a}
.mt ul,.mt ol{margin:2px 0 2px 8px;padding:0}
.mt li{margin-bottom:2.2px}
</style>

<!-- card footer text -->
<div class="t" id="rm" style="left:1245px;top:927px;font-size:27px;font-weight:bold;color:#141414">Race Mode</div>
<div class="t" id="visit" style="left:1973px;top:929.5px;font-size:23px;font-weight:bold;color:#333">Visit</div>
<svg style="left:2034px;top:928px" width="22" height="22" viewBox="0 0 22 22">
  <path d="M3 19.5 L19 3.5 M5 3 H19.5 V17" fill="none" stroke="#333" stroke-width="2.2"/>
</svg>
<div class="t" id="desc" style="left:1245px;top:979px;font-size:24px;color:#767676">Get multiple enhanced results in Race Mode.</div>

<!-- pagination -->
<div class="a" style="left:1555px;top:1075px;width:100px;height:12px;border-radius:6px;background:#d9d9d9"></div>
<div class="a" style="left:1555px;top:1075px;width:38px;height:12px;border-radius:6px;background:#7f9cfd"></div>
<div class="a" style="left:1667px;top:1075px;width:12px;height:12px;border-radius:50%;background:#ebebeb"></div>
<div class="a" style="left:1691px;top:1075px;width:12px;height:12px;border-radius:50%;background:#ebebeb"></div>
<div class="a" style="left:1715px;top:1075px;width:12px;height:12px;border-radius:50%;background:#ebebeb"></div>
<div class="a" style="left:1739px;top:1075px;width:12px;height:12px;border-radius:50%;background:#ebebeb"></div>

<!-- bottom shade -->
<div class="a" style="left:0;top:1290px;width:2316px;height:84px;pointer-events:none;background:linear-gradient(180deg,rgba(0,0,0,0) 0%,rgba(0,0,0,0.012) 50%,rgba(0,0,0,0.058) 100%)"></div>

<svg style="left:0;top:1352px" width="8" height="22" viewBox="0 0 8 22">
  <path d="M0 0 Q0.6 6 1.2 10 Q2.5 17 6.5 22 H0 Z" fill="#14202f"/>
</svg>
</body></html>
